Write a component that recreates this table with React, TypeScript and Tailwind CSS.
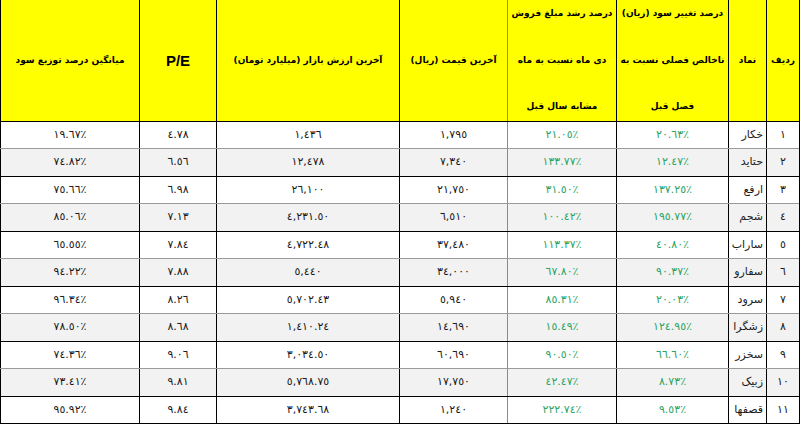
const rows = [
  ["١", "خکار", "٢٠.٦٣٪", "٢١.٠٥٪", "١,٧٩٥", "١,٤٣٦", "٤.٧٨", "١٩.٦٧٪"],
  ["٢", "حتاید", "١٢.٤٧٪", "١٣٣.٧٧٪", "٧,٣٤٠", "١٢,٤٧٨", "٦.٥٦", "٧٤.٨٢٪"],
  ["٣", "ارفع", "١٣٧.٢٥٪", "٣١.٥٠٪", "٢١,٧٥٠", "٢٦,١٠٠", "٦.٩٨", "٧٥.٦٦٪"],
  ["٤", "شجم", "١٩٥.٧٧٪", "١٠٠.٤٢٪", "٦,٥١٠", "٤,٢٣١.٥٠", "٧.١٣", "٨٥.٠٦٪"],
  ["٥", "ساراب", "٤٠.٨٠٪", "١١٣.٣٧٪", "٣٧,٤٨٠", "٤,٧٢٢.٤٨", "٧.٨٤", "٦٥.٥٥٪"],
  ["٦", "سفارو", "٩٠.٣٧٪", "٦٧.٨٠٪", "٣٤,٠٠٠", "٥,٤٤٠", "٧.٨٨", "٩٤.٢٢٪"],
  ["٧", "سرود", "٢٠.٠٣٪", "٨٥.٣١٪", "٥,٩٤٠", "٥,٧٠٢.٤٣", "٨.٢٦", "٩٦.٣٤٪"],
  ["٨", "زشگرا", "١٢٤.٩٥٪", "١٥.٤٩٪", "١٤,٦٩٠", "١,٤١٠.٢٤", "٨.٦٨", "٧٨.٥٠٪"],
  ["٩", "سخزر", "٦٦.٦٠٪", "٩٠.٥٠٪", "٦٠,٦٩٠", "٣,٠٣٤.٥٠", "٩.٠٦", "٧٤.٣٦٪"],
  ["١٠", "زبیک", "٨.٧٣٪", "٤٢.٤٧٪", "١٧,٧٥٠", "٥,٧٦٨.٧٥", "٩.٨١", "٧٣.٤١٪"],
  ["١١", "قصفها", "٩.٥٣٪", "٢٢٢.٧٤٪", "١,٢٤٠", "٣,٧٤٣.٦٨", "٩.٨٤", "٩٥.٩٢٪"],
];

const font = { fontFamily: '"DejaVu Sans", sans-serif' };

function HeadCell({ w, border, children }: { w: string; border: string; children: React.ReactNode }) {
  return (
    <div className={`${w} ${border} border-l flex items-center justify-center text-center whitespace-nowrap`}>
      {children}
    </div>
  );
}

export default function App() {
  return (
    <div dir="rtl" className="w-[800px] h-[425px] bg-white overflow-hidden text-black" style={font}>
      <div className="border-r border-black w-[800px]">
        {/* header */}
        <div className="flex h-[122px] bg-[#ffff00] border-b border-black text-[9px] font-bold leading-none">
          <HeadCell w="w-[33px]" border="border-black">ردیف</HeadCell>
          <HeadCell w="w-[38px]" border="border-black">نماد</HeadCell>
          <div className="w-[112px] border-l border-black flex flex-col items-center justify-between pt-[9px] pb-[10px] whitespace-nowrap">
            <span>درصد تغییر سود (زیان)</span>
            <span>ناخالص فصلی نسبت به</span>
            <span>فصل قبل</span>
          </div>
          <div className="w-[109px] border-l border-[#8a8a8a] flex flex-col items-center justify-between pt-[9px] pb-[10px] whitespace-nowrap">
            <span>درصد رشد مبلغ فروش</span>
            <span>دی ماه نسبت به ماه</span>
            <span>مشابه سال قبل</span>
          </div>
          <HeadCell w="w-[108px]" border="border-black">آخرین قیمت (ریال)</HeadCell>
          <HeadCell w="w-[183px]" border="border-black">آخرین ارزش بازار (میلیارد تومان)</HeadCell>
          <HeadCell w="w-[77px]" border="border-black">
            <span className="text-[15px]" style={{ fontFamily: '"Liberation Sans", Arial, sans-serif' }}>
              P/E
            </span>
          </HeadCell>
          <HeadCell w="w-[139px]" border="border-black">میانگین درصد توزیع سود</HeadCell>
        </div>

        {/* body */}
        {rows.map((r, i) => {
          const h = i % 2 === 0 ? "h-[27px]" : "h-[28px]";
          const bg = i % 2 === 0 ? "bg-white" : "bg-[#f2f2f2]";
          const bb = i % 2 === 0 && i !== rows.length - 1 ? "border-[#9a9a9a]" : "border-black";
          return (
            <div key={i} className={`flex ${h} ${bg} border-b ${bb} text-[11px] text-[#1a1a1a]`}>
              <div className="w-[33px] border-l border-black flex items-center justify-center">{r[0]}</div>
              <div className="w-[38px] border-l border-black flex items-center justify-start pr-[3px] whitespace-nowrap overflow-hidden">
                {r[1]}
              </div>
              <div dir="ltr" className="w-[112px] border-l border-black flex items-center justify-center text-[#2ba463]">
                {r[2]}
              </div>
              <div dir="ltr" className="w-[109px] border-l border-[#8a8a8a] flex items-center justify-center text-[#2ba463]">
                {r[3]}
              </div>
              <div dir="ltr" className="w-[108px] border-l border-black flex items-center justify-center">{r[4]}</div>
              <div dir="ltr" className="w-[183px] border-l border-black flex items-center justify-center">{r[5]}</div>
              <div dir="ltr" className="w-[77px] border-l border-black flex items-center justify-center">{r[6]}</div>
              <div dir="ltr" className="w-[139px] border-l border-black flex items-center justify-center">{r[7]}</div>
            </div>
          );
        })}
      </div>
    </div>
  );
}
